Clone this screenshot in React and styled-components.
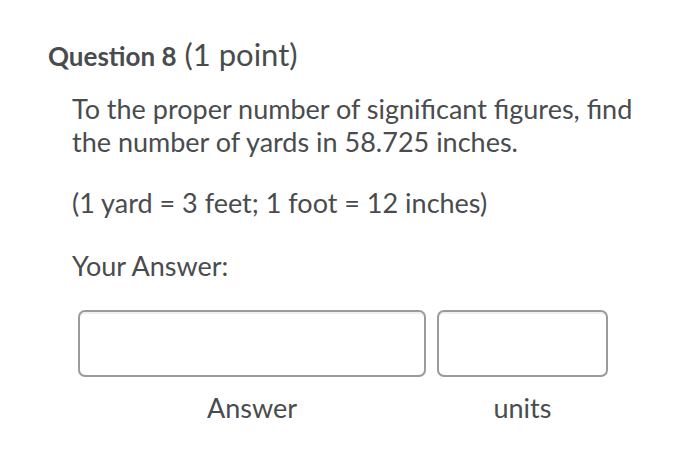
import React from 'react'
import styled, { createGlobalStyle } from 'styled-components'

const GlobalStyle = createGlobalStyle`
    body {
        margin: 0;
        background: #ffffff;
        font-family: Lato, "Open Sans", sans-serif;
        color: #494c4e;
    }
`;

function App() {
    return (
        <Page>
            <GlobalStyle />
            <Title>
                <strong>Question 8</strong> (1 point)
            </Title>
            <Body>
                <Para>
                    To the proper number of significant figures, find
                    <br />
                    the number of yards in 58.725 inches.
                </Para>
                <Para $gap={28}>(1 yard = 3 feet; 1 foot = 12 inches)</Para>
                <Para $gap={30}>Your Answer:</Para>
                <Fields>
                    <Field $width={348}>
                        <Box />
                        <Label>Answer</Label>
                    </Field>
                    <Field $width={171}>
                        <Box />
                        <Label>units</Label>
                    </Field>
                </Fields>
            </Body>
        </Page>
    )
}

export default App

const Page = styled.div`
    padding: 38px 0 0 48px;
    width: 700px;
    height: 470px;
    box-sizing: border-box;
`;

const Title = styled.h2`
    margin: 0;
    font-size: 31px;
    line-height: 33px;
    font-weight: 400;

    strong {
        font-size: 26px;
        font-weight: 700;
    }
`;

const Body = styled.div`
    margin: 19px 0 0 24px;
`;

const Para = styled.p`
    margin: ${(p) => p.$gap || 0}px 0 0;
    font-size: 27px;
    line-height: 33px;
`;

const Fields = styled.div`
    display: flex;
    gap: 11px;
    margin: 28px 0 0 6px;
`;

const Field = styled.div`
    display: flex;
    flex-direction: column;
    align-items: center;
    width: ${(p) => p.$width}px;
`;

const Box = styled.div`
    width: 100%;
    height: 67px;
    box-sizing: border-box;
    border: 2px solid #9b9b9b;
    border-radius: 7px;
    background: #fff;
    box-shadow: inset 0 2px 0 rgba(0, 0, 0, 0.06);
`;

const Label = styled.span`
    margin-top: 14px;
    font-size: 27px;
    line-height: 33px;
`;
